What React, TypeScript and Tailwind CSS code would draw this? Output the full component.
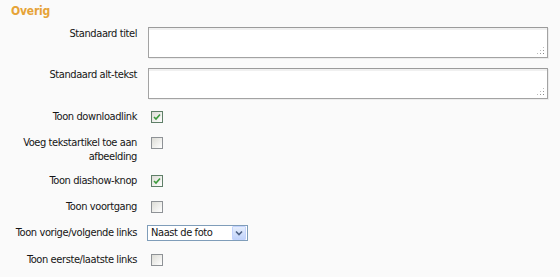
import React from 'react';

const FONT = "font-['DejaVu_Sans_Condensed','Liberation_Sans',sans-serif]";

function Checkbox({ checked }: { checked?: boolean }) {
    return (
        <span
            className={`inline-flex h-[12px] w-[12px] items-center justify-center border ${checked ? 'border-[#5f7f68]' : 'border-[#8e9296]'} bg-gradient-to-br from-[#dcdcd6] to-[#ffffff]`}
        >
            {checked && (
                <svg width="8" height="8" viewBox="0 0 8 8">
                    <path d="M1 4 L3 6 L7 1.5" fill="none" stroke="#3c9a3c" strokeWidth="1.6" />
                </svg>
            )}
        </span>
    );
}

function Grip() {
    return (
        <svg className="absolute bottom-[2px] right-[2px]" width="8" height="8" viewBox="0 0 8 8">
            <rect x="6" y="0" width="1" height="1" fill="#bbb" />
            <rect x="3" y="3" width="1" height="1" fill="#bbb" />
            <rect x="6" y="3" width="1" height="1" fill="#999" />
            <rect x="0" y="6" width="1" height="1" fill="#bbb" />
            <rect x="3" y="6" width="1" height="1" fill="#999" />
            <rect x="6" y="6" width="1" height="1" fill="#888" />
        </svg>
    );
}

function TextBox() {
    return (
        <div className="relative h-[31px] w-[400px] border border-[#a3a3a3] border-t-[#9b9b9b] bg-white shadow-[1px_1px_0_#ececec]">
            <div className="h-[2px] bg-[#f0f0f0]" />
            <Grip />
        </div>
    );
}

function Row({ label, children }: { label: React.ReactNode; children: React.ReactNode }) {
    return (
        <div className="flex items-start">
            <div className="w-[137px] text-right leading-[14px]">{label}</div>
            <div className="ml-[11px] flex">{children}</div>
        </div>
    );
}

function CheckRow({ label, checked, className = '' }: { label: React.ReactNode; checked?: boolean; className?: string }) {
    return (
        <div className={`flex items-start ${className}`}>
            <div className="w-[137px] text-right leading-[14px]">{label}</div>
            <div className="ml-[14px] mt-[1px] flex">
                <Checkbox checked={checked} />
            </div>
        </div>
    );
}

export default function App() {
    return (
        <div className={`h-[277px] w-[560px] bg-[#fafafa] text-[11px] tracking-[-0.4px] text-[#151515] ${FONT}`}>
            <div className="pl-[11px] pt-[3px] text-[12px] font-bold leading-[16px] tracking-[-0.2px] text-[#e6a337]">Overig</div>

            <div className="mt-[8px] flex flex-col">
                <Row label="Standaard titel">
                    <TextBox />
                </Row>
                <div className="mt-[10px]">
                    <Row label="Standaard alt-tekst">
                        <TextBox />
                    </Row>
                </div>

                <div className="mt-[11px] flex flex-col gap-[12px]">
                    <CheckRow label="Toon downloadlink" checked />
                    <CheckRow label={<>Voeg tekstartikel toe aan<br />afbeelding</>} />
                    <CheckRow label="Toon diashow-knop" checked className="-mt-[2px]" />
                    <CheckRow label="Toon voortgang" />
                    <div className="-mt-[1px] flex items-center">
                        <div className="w-[137px] text-right leading-[14px]">Toon vorige/volgende links</div>
                        <div className="ml-[10px] flex h-[16px] w-[101px] items-center border border-[#7f9db9] bg-white">
                            <span className="flex-1 pl-[3px] leading-[14px]">Naast de foto</span>
                            <span className="mr-[1px] flex h-[14px] w-[14px] items-center justify-center rounded-[1px] border border-[#c3d3fd] bg-gradient-to-b from-[#e6eefc] to-[#c1d3fb]">
                                <svg width="8" height="6" viewBox="0 0 8 6">
                                    <path d="M1 1.5 L4 4.5 L7 1.5" fill="none" stroke="#4d6185" strokeWidth="1.6" />
                                </svg>
                            </span>
                        </div>
                    </div>
                    <CheckRow label="Toon eerste/laatste links" />
                </div>
            </div>
        </div>
    );
}
